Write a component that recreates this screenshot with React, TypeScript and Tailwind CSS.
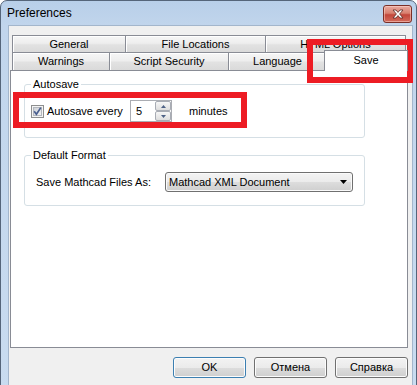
import React from "react";

const tabBase =
  "flex items-center justify-center border-t border-l border-r border-[#898c95] bg-[linear-gradient(to_bottom,#f6f6f6_0%,#eeeeee_45%,#e2e2e2_55%,#dadada_100%)] shadow-[inset_1px_1px_0_#ffffff] leading-[13px]";

const btnBase =
  "flex h-[21px] w-[73px] items-center justify-center rounded-[3px] border bg-[linear-gradient(to_bottom,#f3f3f3_0%,#ebebeb_50%,#dddddd_50%,#cfcfcf_100%)] shadow-[inset_0_0_0_1px_#fcfcfc] leading-[13px]";

function CheckBox() {
  return (
    <svg width="13" height="13" viewBox="0 0 13 13" className="shrink-0">
      <defs>
        <linearGradient id="cbg" x1="0" y1="0" x2="1" y2="1">
          <stop offset="0" stopColor="#cbcfd5" />
          <stop offset="1" stopColor="#f6f6f6" />
        </linearGradient>
      </defs>
      <rect x="0.5" y="0.5" width="12" height="12" fill="#f4f4f4" stroke="#8e8f8f" />
      <rect x="2.5" y="2.5" width="8" height="8" fill="url(#cbg)" stroke="#b4b8be" />
      <path d="M3.2 6.3 L5.4 9.2 L9.8 2.6" fill="none" stroke="#4a5f8f" strokeWidth="1.7" />
    </svg>
  );
}

function SpinArrow({ up }: { up?: boolean }) {
  return (
    <svg width="5" height="3" viewBox="0 0 5 3">
      {up ? <path d="M0 3 L2.5 0 L5 3 Z" fill="#4d6185" /> : <path d="M0 0 L2.5 3 L5 0 Z" fill="#4d6185" />}
    </svg>
  );
}

export default function App() {
  return (
    <div className="relative h-[385px] w-[417px] overflow-hidden bg-white font-['Liberation_Sans',Arial,sans-serif] text-[11px] text-black">
      <div className="flex h-[400px] w-[417px] flex-col rounded-t-[7px] border border-[#55657a] bg-[linear-gradient(to_bottom,#b8cfe9_0px,#c1d5ec_25px,#c9dcf0_100%)]">
        {/* Title bar */}
        <div className="flex h-[24px] shrink-0 items-start justify-between">
          <span className="pl-[6px] pt-[5px] text-[12px] leading-[15px] text-black">Preferences</span>
          <div className="mr-[4px] mt-[4px] flex h-[18px] w-[29px] items-center justify-center rounded-[3px] border border-[#7b2f27] bg-[linear-gradient(to_bottom,#e9aaa0_0%,#d8806f_45%,#c2463a_55%,#d36b5c_100%)] shadow-[inset_0_0_0_1px_rgba(255,220,210,0.5)]">
            <svg width="12" height="10" viewBox="0 0 12 10">
              <path
                d="M1 1 L4 1 L6 3.4 L8 1 L11 1 L7.6 5 L11 9 L8 9 L6 6.6 L4 9 L1 9 L4.4 5 Z"
                fill="#ffffff"
                stroke="#5b2a24"
                strokeWidth="0.8"
                strokeLinejoin="round"
              />
            </svg>
          </div>
        </div>

        {/* Client area */}
        <div className="ml-[7px] mr-[3px] flex flex-1 flex-col border-l border-r border-t border-[#a3b6cc] bg-[#f0f0f0]">
          {/* Tabs */}
          <div className="ml-[3px] mt-[9px] flex flex-col">
            <div className="flex h-[17px]">
              <div className={`${tabBase} w-[114px]`}>General</div>
              <div className={`${tabBase} -ml-px w-[141px]`}>File Locations</div>
              <div className={`${tabBase} -ml-px w-[141px]`}>HTML Options</div>
            </div>
            <div className="flex h-[18px] items-start">
              <div className={`${tabBase} h-[18px] w-[98px]`}>Warnings</div>
              <div className={`${tabBase} -ml-px h-[18px] w-[120px]`}>Script Security</div>
              <div className={`${tabBase} -ml-px h-[18px] w-[99px]`}>Language</div>
              <div className="relative z-10 -ml-[3px] -mt-[2px] flex h-[21px] w-[84px] items-center justify-center border-l border-r border-t border-[#898c95] bg-white pb-[1px] leading-[13px]">
                Save
              </div>
            </div>
          </div>

          {/* Panel */}
          <div className="ml-[1px] h-[278px] w-[398px] shrink-0 border border-[#898c95] bg-white">
            {/* Autosave group */}
            <div className="relative ml-[13px] mt-[13px] h-[54px] w-[341px] rounded-[3px] border border-[#d5dfe5]">
              <span className="absolute -top-[7px] left-[6px] bg-white px-[2px] leading-[13px]">Autosave</span>
              <div className="flex h-[37px] items-end pl-[6px]">
                <div className="flex h-[22px] items-center">
                  <CheckBox />
                  <span className="ml-[3px] w-[83px] leading-[13px]">Autosave every</span>
                  <div className="flex h-[22px] w-[42px] border border-[#abadb3] bg-white">
                    <span className="flex flex-1 items-center pl-[5px] leading-[13px]">5</span>
                    <div className="flex w-[16px] flex-col">
                      <div className="flex h-[10px] items-center justify-center rounded-[2px] border border-[#a8acb4] bg-[linear-gradient(to_bottom,#f6f6f6,#dedede)]">
                        <SpinArrow up />
                      </div>
                      <div className="flex h-[10px] items-center justify-center rounded-[2px] border border-[#a8acb4] bg-[linear-gradient(to_bottom,#f6f6f6,#dedede)]">
                        <SpinArrow />
                      </div>
                    </div>
                  </div>
                  <span className="ml-[17px] leading-[13px]">minutes</span>
                </div>
              </div>
            </div>

            {/* Default Format group */}
            <div className="relative ml-[13px] mt-[17px] h-[51px] w-[341px] rounded-[3px] border border-[#d5dfe5]">
              <span className="absolute -top-[7px] left-[6px] bg-white px-[2px] leading-[13px]">Default Format</span>
              <div className="flex items-center pl-[11px] pt-[16px]">
                <span className="w-[129px] leading-[13px]">Save Mathcad Files As:</span>
                <div className="flex h-[20px] w-[188px] items-center justify-between rounded-[3px] border border-[#707070] bg-[linear-gradient(to_bottom,#f3f3f3_0%,#ebebeb_50%,#dddddd_50%,#cfcfcf_100%)] pl-[3px] pr-[5px] shadow-[inset_0_0_0_1px_#fafafa]">
                  <span className="leading-[13px]">Mathcad XML Document</span>
                  <svg width="7" height="4" viewBox="0 0 7 4">
                    <path d="M0 0 L7 0 L3.5 4 Z" fill="#000000" />
                  </svg>
                </div>
              </div>
            </div>
          </div>

          {/* Buttons */}
          <div className="ml-[164px] mt-[9px] flex gap-[8px]">
            <div className={`${btnBase} border-[#3c7fb1] shadow-[inset_0_0_0_1px_#c6e4f7]`}>OK</div>
            <div className={`${btnBase} border-[#707070]`}>Отмена</div>
            <div className={`${btnBase} border-[#707070]`}>Справка</div>
          </div>
        </div>
      </div>

      {/* Red annotation boxes */}
      <div className="pointer-events-none absolute left-[307px] top-[39px] h-[44px] w-[106px] border-[6px] border-[#ed1c24]" />
      <div className="pointer-events-none absolute left-[13px] top-[92px] h-[36px] w-[234px] border-[6px] border-[#ed1c24]" />
    </div>
  );
}
